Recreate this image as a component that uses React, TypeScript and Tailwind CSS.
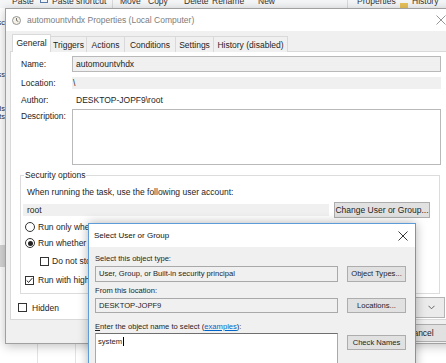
import React from "react";

const Check = ({ checked = false }: { checked?: boolean }) => (
  <span className="w-[9px] h-[9px] border border-[#333] bg-white flex items-center justify-center shrink-0">
    {checked && (
      <svg width="7" height="7" viewBox="0 0 7 7">
        <path d="M0.7 3.5 L2.6 5.4 L6.3 1.1" fill="none" stroke="#222" strokeWidth="1" />
      </svg>
    )}
  </span>
);

const Radio = ({ on = false }: { on?: boolean }) => (
  <span className="w-[10px] h-[10px] rounded-full border border-[#333] bg-white flex items-center justify-center shrink-0">
    {on && <span className="w-[5px] h-[5px] rounded-full bg-[#222]" />}
  </span>
);

const CloseX = ({ color = "#333" }: { color?: string }) => (
  <svg width="10" height="10" viewBox="0 0 10 10">
    <path d="M0.5 0.5 L9.5 9.5 M9.5 0.5 L0.5 9.5" stroke={color} strokeWidth="0.9" fill="none" />
  </svg>
);

const ClockIcon = () => (
  <svg width="9" height="9" viewBox="0 0 9 9">
    <circle cx="4.5" cy="4.5" r="4" fill="#f4f1e6" stroke="#8a8a8a" strokeWidth="0.9" />
    <path d="M4.5 2 L4.5 4.6 L6.3 5.5" stroke="#666" strokeWidth="0.9" fill="none" />
  </svg>
);

const Btn = ({ children, className = "" }: { children: React.ReactNode; className?: string }) => (
  <div
    className={
      "bg-[#e1e1e1] border border-[#adadad] flex items-center justify-center whitespace-nowrap shrink-0 " +
      className
    }
  >
    {children}
  </div>
);

function Background() {
  return (
    <div className="absolute inset-0 flex flex-col bg-white">
      <div className="h-[8px] bg-[#f5f6f7] overflow-hidden flex text-[8.5px] leading-[10px] text-[#333] pl-[12px] shrink-0 whitespace-nowrap">
        <span className="w-[28px] relative -top-[4px]">Paste</span>
        <span className="w-[12px] relative -top-[3px]">
          <span className="block w-[8px] h-[6px] border border-[#5a7aa8]" />
        </span>
        <span className="w-[60px] relative -top-[4px] overflow-hidden">Paste shortcut</span>
        <span className="w-[8px] border-l border-[#dadada]" />
        <span className="w-[28px] relative -top-[4px]">Move</span>
        <span className="w-[36px] relative -top-[4px]">Copy</span>
        <span className="w-[28px] relative -top-[4px]">Delete</span>
        <span className="w-[46px] relative -top-[4px]">Rename</span>
        <span className="w-[89px] relative -top-[4px]">New</span>
        <span className="w-[10px] border-l border-[#dadada]" />
        <span className="w-[43px] relative -top-[4px]">Properties</span>
        <span className="w-[12px] relative top-[3px]">
          <span className="block w-[8px] h-[6px] bg-[#e8c25a]" />
        </span>
        <span className="relative -top-[4px]">History</span>
      </div>
      <div className="flex-1 flex">
        <div className="w-[5px] flex flex-col overflow-hidden text-[7.5px] leading-[8px] text-[#333]">
          <div className="h-[8px] mt-[11px] flex justify-end whitespace-nowrap">Desc</div>
          <div className="h-[8px] mt-[44px] flex justify-end whitespace-nowrap">Process</div>
          <div className="h-[8px] mt-[26px] flex justify-end whitespace-nowrap">Downloads</div>
          <div className="h-[8px] flex justify-end whitespace-nowrap">Documents</div>
          <div className="h-[22px] mt-[124px] bg-[#d6d6d6]" />
        </div>
        <div className="w-[33px] border-r border-[#e3e3e3]" />
        <div className="w-[38px] border-r border-[#e3e3e3]" />
      </div>
    </div>
  );
}

function PropertiesWindow() {
  const tabs = ["Triggers", "Actions", "Conditions", "Settings", "History (disabled)"];
  const widths = ["w-[37px]", "w-[39px]", "w-[52px]", "w-[39px]", "w-[75px]"];
  return (
    <div className="absolute left-[5px] top-[8px] w-[470px] h-[336px] border border-[#a0a0a0] bg-[#f0f0f0] shadow-[0_2px_10px_rgba(0,0,0,0.25)] flex flex-col">
      <div className="h-[22px] bg-white flex items-center shrink-0">
        <span className="ml-[6px] flex">
          <ClockIcon />
        </span>
        <span className="ml-[6px] text-[#7d7d7d]">automountvhdx Properties (Local Computer)</span>
        <span className="ml-auto mr-[28px] flex">
          <CloseX color="#8a8a8a" />
        </span>
      </div>
      <div className="flex flex-col pl-[4px] pt-[3px]">
        <div className="flex items-end h-[18px] pl-[2px] relative z-10">
          <div className="w-[39px] h-[18px] bg-white border border-[#d9d9d9] border-b-0 flex items-center justify-center pb-[1px]">
            General
          </div>
          {tabs.map((t, i) => (
            <div
              key={t}
              className={
                widths[i] +
                " h-[16px] -ml-px bg-[#f0f0f0] border border-[#d9d9d9] border-b-0 flex items-center justify-center whitespace-nowrap"
              }
            >
              {t}
            </div>
          ))}
        </div>
        <div className="w-[442px] h-[269px] -mt-px bg-white border border-[#d9d9d9] pl-[10px] pt-[4px] flex flex-col">
          <div className="flex items-center h-[16px]">
            <span className="w-[51px]">Name:</span>
            <div className="w-[369px] h-[16px] bg-[#f0f0f0] border border-[#b9b9b9] flex items-center pl-[3px]">
              automountvhdx
            </div>
          </div>
          <div className="flex items-center h-[12px] mt-[5px]">
            <span className="w-[51px]">Location:</span>
            <div className="w-[369px] h-[12px] bg-[#f0f0f0] flex items-center pl-[1px]">\</div>
          </div>
          <div className="flex items-center h-[12px] mt-[5px]">
            <span className="w-[51px]">Author:</span>
            <span className="pl-[4px]">DESKTOP-JOPF9\root</span>
          </div>
          <div className="flex mt-[3px]">
            <span className="w-[51px] pt-[2px]">Description:</span>
            <div className="w-[369px] h-[56px] bg-white border border-[#b9b9b9]" />
          </div>
          <div className="relative mt-[10px] -ml-px w-[420px] h-[119px] border border-[#dcdcdc] flex flex-col">
            <span className="absolute -top-[6px] left-[3px] bg-white px-[1px] leading-[10px]">Security options</span>
            <div className="overflow-hidden flex flex-col">
              <div className="mt-[11px] h-[10px] pl-[6px] whitespace-nowrap">
                When running the task, use the following user account:
              </div>
              <div className="mt-[5px] h-[16px] flex items-center">
                <div className="ml-[2px] w-[306px] h-[12px] bg-[#f0f0f0] flex items-center pl-[4px]">root</div>
                <Btn className="ml-[5px] w-[96px] h-[16px] border-[#0078d7]">Change User or Group...</Btn>
              </div>
              <div className="mt-[4px] h-[10px] pl-[4px] flex items-center gap-[3px] whitespace-nowrap">
                <Radio />
                <span>Run only when user is logged on</span>
              </div>
              <div className="mt-[6px] h-[10px] pl-[4px] flex items-center gap-[3px] whitespace-nowrap">
                <Radio on />
                <span>Run whether user is logged on or not</span>
              </div>
              <div className="mt-[8px] h-[10px] pl-[19px] flex items-center gap-[3px] whitespace-nowrap">
                <Check />
                <span>Do not store password. The task will only have access to local resources</span>
              </div>
              <div className="mt-[9px] h-[10px] pl-[4px] flex items-center gap-[4px] whitespace-nowrap">
                <Check checked />
                <span>Run with highest privileges</span>
              </div>
            </div>
          </div>
          <div className="flex items-center h-[21px] mt-[3px] -ml-[3px]">
            <Check />
            <span className="ml-[5px]">Hidden</span>
            <span className="ml-auto mr-[6px]">Configure for:</span>
            <div className="mr-[6px] w-[190px] h-[21px] bg-[#ebebeb] border border-[#b4b4b4] flex items-center justify-between pl-[4px] pr-[9px]">
              <span>Windows 10</span>
              <svg width="7" height="5" viewBox="0 0 7 5">
                <path d="M0.5 0.8 L3.5 3.8 L6.5 0.8" fill="none" stroke="#555" strokeWidth="0.9" />
              </svg>
            </div>
          </div>
        </div>
        <div className="mt-[4px] flex justify-end pr-[16px] gap-[6px]">
          <Btn className="w-[75px] h-[18px]">OK</Btn>
          <Btn className="w-[75px] h-[18px]">Cancel</Btn>
        </div>
      </div>
    </div>
  );
}

function SelectDialog() {
  return (
    <div className="absolute left-[88px] top-[223px] w-[328px] h-[150px] border border-[#5d9cd8] bg-[#f0f0f0] shadow-[0_0_10px_rgba(0,0,0,0.3)] flex flex-col">
      <div className="h-[23px] bg-white flex items-center shrink-0 text-[8px]">
        <span className="ml-[5px] text-[#111]">Select User or Group</span>
        <span className="ml-auto mr-[7px] flex">
          <CloseX color="#222" />
        </span>
      </div>
      <div className="flex flex-col px-[6px] pt-[7px] text-[7.6px] leading-[10px]">
        <div className="h-[10px]">Select this object type:</div>
        <div className="mt-[2px] flex">
          <div className="w-[243px] h-[16px] bg-[#f0f0f0] border border-[#a9a9a9] flex items-center pl-[3px] whitespace-nowrap">
            User, Group, or Built-in security principal
          </div>
          <Btn className="ml-[9px] w-[59px] h-[16px]">Object Types...</Btn>
        </div>
        <div className="mt-[4px] h-[10px]">From this location:</div>
        <div className="mt-[2px] flex">
          <div className="w-[243px] h-[15px] bg-[#f0f0f0] border border-[#a9a9a9] flex items-center pl-[3px]">
            DESKTOP-JOPF9
          </div>
          <Btn className="ml-[9px] w-[59px] h-[15px]">Locations...</Btn>
        </div>
        <div className="mt-[9px] h-[10px] whitespace-nowrap">
          <span className="underline">E</span>nter the object name to select (
          <span className="text-[#0066cc] underline">examples</span>):
        </div>
        <div className="mt-[1px] flex items-start">
          <div className="w-[243px] h-[40px] bg-white border border-[#a9a9a9] border-t-[#6f6f6f] pl-[2px] pt-[3px] flex items-start">
            <span>system</span>
            <span className="w-px h-[9px] bg-black ml-px" />
          </div>
          <Btn className="ml-[9px] mt-[2px] w-[59px] h-[15px]">Check Names</Btn>
        </div>
      </div>
    </div>
  );
}

export default function App() {
  return (
    <div className="relative w-[446px] h-[363px] overflow-hidden bg-white font-['Liberation_Sans',Arial,sans-serif] text-[8.5px] leading-[10px] text-[#1e1e1e]">
      <Background />
      <PropertiesWindow />
      <SelectDialog />
    </div>
  );
}
